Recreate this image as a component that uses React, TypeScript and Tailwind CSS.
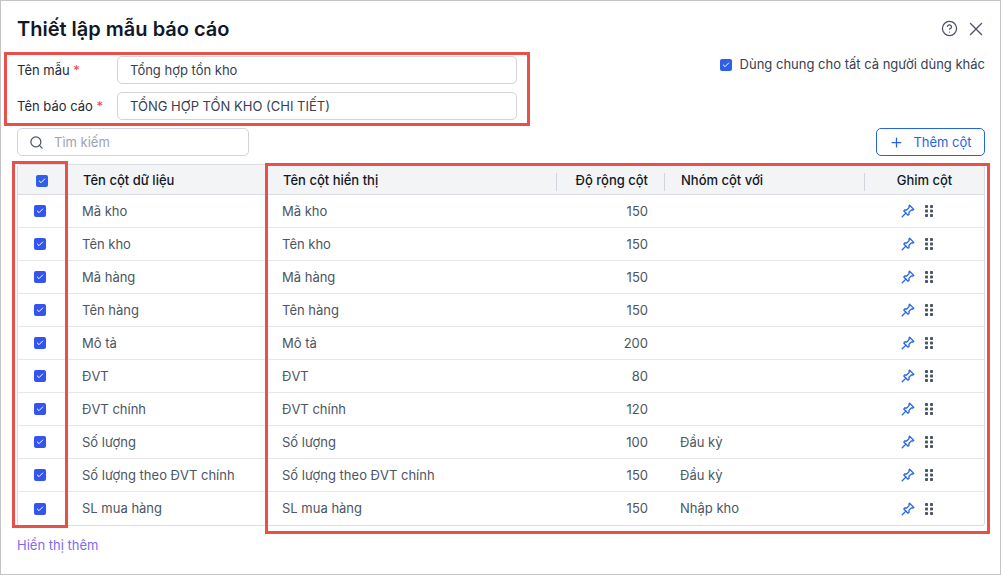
import React from 'react';
import { Check, CircleHelp, Plus, Search, X } from 'lucide-react';

const rows = [
  { name: 'Mã kho', width: 150, group: '' },
  { name: 'Tên kho', width: 150, group: '' },
  { name: 'Mã hàng', width: 150, group: '' },
  { name: 'Tên hàng', width: 150, group: '' },
  { name: 'Mô tả', width: 200, group: '' },
  { name: 'ĐVT', width: 80, group: '' },
  { name: 'ĐVT chính', width: 120, group: '' },
  { name: 'Số lượng', width: 100, group: 'Đầu kỳ' },
  { name: 'Số lượng theo ĐVT chính', width: 150, group: 'Đầu kỳ' },
  { name: 'SL mua hàng', width: 150, group: 'Nhập kho' },
];

const Box = ({ color = 'bg-[#2f5fe8]' }: { color?: string }) => (
  <span className={`w-[12px] h-[12px] rounded-[2px] flex items-center justify-center shrink-0 ${color}`}>
    <Check size={8} strokeWidth={3} className="text-white" />
  </span>
);

const PinIcon = () => (
  <svg width="14" height="14" viewBox="0 0 14 14" fill="none" stroke="#2563eb" strokeWidth="1.3" strokeLinejoin="round" strokeLinecap="round">
    <path d="M8.6 1.2 12.8 5.4 11.9 6 10.4 5.9 8 8.3 8 10.5 7 11.2 2.8 7 3.5 6 5.7 6 8.1 3.6 8 2.1Z" />
    <path d="M4.9 9.1 1.2 12.8" />
  </svg>
);

const GripIcon = () => (
  <svg width="8" height="12" viewBox="0 0 8 12" fill="#4b5563">
    <rect x="0" y="0" width="3" height="3" rx="0.8" />
    <rect x="5" y="0" width="3" height="3" rx="0.8" />
    <rect x="0" y="4.5" width="3" height="3" rx="0.8" />
    <rect x="5" y="4.5" width="3" height="3" rx="0.8" />
    <rect x="0" y="9" width="3" height="3" rx="0.8" />
    <rect x="5" y="9" width="3" height="3" rx="0.8" />
  </svg>
);

const Field = ({ label, value }: { label: string; value: string }) => (
  <div className="flex items-center h-[28px]">
    <label className="w-[100px] shrink-0 pt-[1px] text-[13px] text-[#1f2937]">
      {label} <span className="text-[#ef4444]">*</span>
    </label>
    <div className="w-[400px] h-[28px] border border-[#d1d5db] rounded-[5px] px-[12px] pt-[1px] flex items-center text-[13px] text-[#374151]">
      {value}
    </div>
  </div>
);

const HeadCell = ({ children, className = '', divider = false }: { children: React.ReactNode; className?: string; divider?: boolean }) => (
  <div className={`relative flex items-center h-full ${className}`}>
    {children}
    {divider && <span className="absolute right-0 top-[6px] h-[18px] w-px bg-[#d1d5db]" />}
  </div>
);

export default function App() {
  return (
    <div className="relative w-[1001px] h-[575px] bg-white border border-[#c4c4c4] overflow-hidden text-[#374151] [font-family:Inter,'Liberation_Sans',sans-serif]">
      <div className="pl-[16px] pr-[15px]">
        <div className="flex items-center justify-between h-[53px] pt-[2px]">
          <h1 className="text-[20px] font-semibold text-[#111827]">Thiết lập mẫu báo cáo</h1>
          <div className="flex items-center gap-[7px] -mr-[2px] text-[#4b5563]">
            <CircleHelp size={17} strokeWidth={1.8} />
            <X size={22} strokeWidth={1.5} />
          </div>
        </div>

        <div className="flex justify-between h-[74px]">
          <div className="flex flex-col gap-[8px] pt-[2px]">
            <Field label="Tên mẫu" value="Tổng hợp tồn kho" />
            <Field label="Tên báo cáo" value="TỔNG HỢP TỒN KHO (CHI TIẾT)" />
          </div>
          <div className="flex items-center gap-[8px] h-[20px] mt-[1px] text-[13px] text-[#374151]">
            <Box />
            <span>Dùng chung cho tất cả người dùng khác</span>
          </div>
        </div>

        <div className="flex items-center justify-between h-[28px]">
          <div className="w-[232px] h-[28px] border border-[#d1d5db] rounded-[5px] flex items-center gap-[10px] px-[11px] pt-[1px] text-[13px] text-[#9ca3af]">
            <Search size={15} className="text-[#4b5563]" />
            <span>Tìm kiếm</span>
          </div>
          <button className="w-[109px] h-[28px] border border-[#2563eb] rounded-[5px] pt-[1px] flex items-center justify-center gap-[9px] text-[13px] text-[#2563eb]">
            <Plus size={15} />
            <span>Thêm cột</span>
          </button>
        </div>

        <div className="mt-[8px] w-[968px] border border-[#d9dce1] rounded-[3px]">
          <div className="grid grid-cols-[48px_200px_291px_108px_200px_1fr] h-[30px] pt-[2px] bg-[#f3f4f6] border-b border-[#d9dce1] text-[13px] font-medium text-[#111827]">
            <HeadCell className="pl-[18px]"><Box /></HeadCell>
            <HeadCell className="pl-[17px]">Tên cột dữ liệu</HeadCell>
            <HeadCell className="pl-[17px]" divider>Tên cột hiển thị</HeadCell>
            <HeadCell className="justify-end pr-[17px]" divider>Độ rộng cột</HeadCell>
            <HeadCell className="pl-[16px]" divider>Nhóm cột với</HeadCell>
            <HeadCell className="justify-center">Ghim cột</HeadCell>
          </div>
          {rows.map((row, i) => (
            <div
              key={row.name}
              className={`grid grid-cols-[48px_200px_291px_108px_200px_1fr] h-[33px] items-center text-[13px] text-[#4b5563] ${i < rows.length - 1 ? 'border-b border-[#e5e7eb]' : ''}`}
            >
              <div className="flex pl-[16px]"><Box color="bg-[#3355ee]" /></div>
              <div className="pl-[16px] pt-[1px]">{row.name}</div>
              <div className="pl-[16px] pt-[1px]">{row.name}</div>
              <div className="text-right pr-[17px] pt-[1px]">{row.width}</div>
              <div className="pl-[15px] pt-[1px]">{row.group}</div>
              <div className="flex items-center justify-center gap-[10px] pr-[16px]">
                <PinIcon />
                <GripIcon />
              </div>
            </div>
          ))}
        </div>

        <div className="mt-[10px] text-[13px] text-[#7c6cf0]">Hiển thị thêm</div>
      </div>

      {/* annotation boxes on top of the screenshot */}
      <div className="absolute left-[3px] top-[51px] w-[526px] h-[74px] border-[3px] border-[#e8504a]" />
      <div className="absolute left-[11px] top-[160px] w-[56px] h-[367px] border-[3px] border-[#e8504a]" />
      <div className="absolute left-[264px] top-[162px] w-[725px] h-[371px] border-[3px] border-[#e8504a]" />
    </div>
  );
}
